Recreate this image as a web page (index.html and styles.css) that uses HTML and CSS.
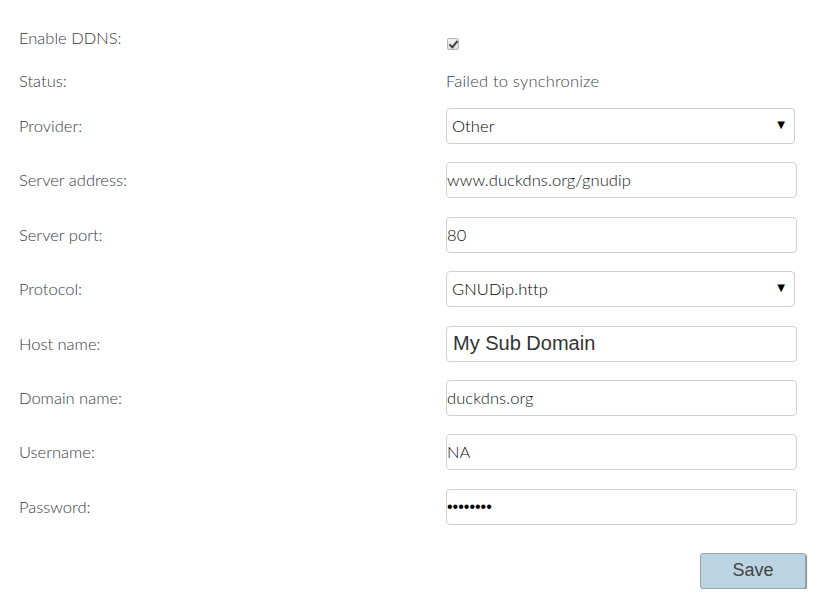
FILE: index.html
```html
<!doctype html>
<html>
<head>
<meta charset="utf-8">
<link rel="stylesheet" href="styles.css">
<title>DDNS settings</title>
</head>
<body>

<form class="ddns">
  <div class="row row-check">
    <label class="caption">Enable DDNS:</label>
    <input type="checkbox" class="check" name="enable" checked>
  </div>

  <div class="row row-status">
    <span class="caption">Status:</span>
    <span class="status">Failed to synchronize</span>
  </div>

  <div class="row">
    <label class="caption">Provider:</label>
    <div class="picker">
      <select name="provider">
        <option>DynDNS</option>
        <option selected>Other</option>
      </select>
    </div>
  </div>

  <div class="row">
    <label class="caption">Server address:</label>
    <input type="text" class="field" name="server" value="www.duckdns.org/gnudip">
  </div>

  <div class="row">
    <label class="caption">Server port:</label>
    <input type="text" class="field" name="port" value="80">
  </div>

  <div class="row">
    <label class="caption">Protocol:</label>
    <div class="picker">
      <select name="protocol">
        <option selected>GNUDip.http</option>
        <option>DynDNS</option>
      </select>
    </div>
  </div>

  <div class="row">
    <label class="caption">Host name:</label>
    <input type="text" class="field field-big" name="host" value="My Sub Domain">
  </div>

  <div class="row">
    <label class="caption">Domain name:</label>
    <input type="text" class="field" name="domain" value="duckdns.org">
  </div>

  <div class="row">
    <label class="caption">Username:</label>
    <input type="text" class="field" name="user" value="NA">
  </div>

  <div class="row">
    <label class="caption">Password:</label>
    <input type="password" class="field field-pass" name="password" value="secret12">
  </div>

  <div class="actions">
    <button type="button" class="save">Save</button>
  </div>
</form>

</body>
</html>
```

FILE: styles.css
```css
body {
  margin: 0;
  background: #fff;
  font: 300 16.5px "Lato", "Open Sans", sans-serif;
  color: #555;
}

.ddns {
  padding: 26px 0 0 19px;
  width: 787px;
}

.row {
  display: flex;
  align-items: center;
  height: 36px;
  margin-bottom: 18.4px;
}

.row-check {
  height: 24px;
  margin-bottom: 19px;
}

.row-status {
  height: 24px;
  margin-bottom: 15px;
}

.caption {
  width: 427px;
  flex: none;
  letter-spacing: 0;
  color: #3a3a44;
}

.status {
  letter-spacing: 0.2px;
  color: #42424c;
}

.check {
  -webkit-appearance: none;
  appearance: none;
  position: relative;
  margin: 12px 0 0 1px;
  width: 12px;
  height: 12px;
  border: 1px solid #b5b5b5;
  border-radius: 2px;
  background: linear-gradient(#f2f2f2, #dcdcdc);
}

.check:checked::after {
  content: "";
  position: absolute;
  left: 3px;
  top: 0;
  width: 3px;
  height: 7px;
  border: solid #444;
  border-width: 0 2px 2px 0;
  transform: rotate(40deg);
}

.field,
.picker select {
  box-sizing: border-box;
  height: 36px;
  border: 1px solid #cfcfcf;
  border-radius: 4px;
  background: #fff;
  font: 300 16.5px "Lato", "Open Sans", sans-serif;
  letter-spacing: 0.1px;
  color: #111;
  outline: none;
}

.field {
  width: 351px;
  padding: 0;
}

.field-big {
  padding-left: 6px;
  font: 20px "Liberation Sans", Arial, sans-serif;
  letter-spacing: 0;
  color: #333;
}

.field-pass {
  font: 16px "Liberation Sans", Arial, sans-serif;
  letter-spacing: 0;
  color: #000;
}

.picker {
  position: relative;
  width: 349px;
}

.picker select {
  -webkit-appearance: none;
  appearance: none;
  width: 100%;
  padding: 0 24px 0 5px;
  color: #000;
}

.picker::after {
  content: "\25BC";
  position: absolute;
  right: 10px;
  top: 11px;
  font: 10px "DejaVu Sans", sans-serif;
  color: #000;
  pointer-events: none;
}

.actions {
  display: flex;
  justify-content: flex-end;
  margin-top: 28px;
}

.save {
  width: 106px;
  height: 36px;
  border: 1px solid #9aa4ab;
  border-radius: 3px;
  background: #bcd3e2;
  box-shadow: 1px 1px 1px #8a8a8a;
  font: 18px "Liberation Sans", Arial, sans-serif;
  color: #444;
}
```
